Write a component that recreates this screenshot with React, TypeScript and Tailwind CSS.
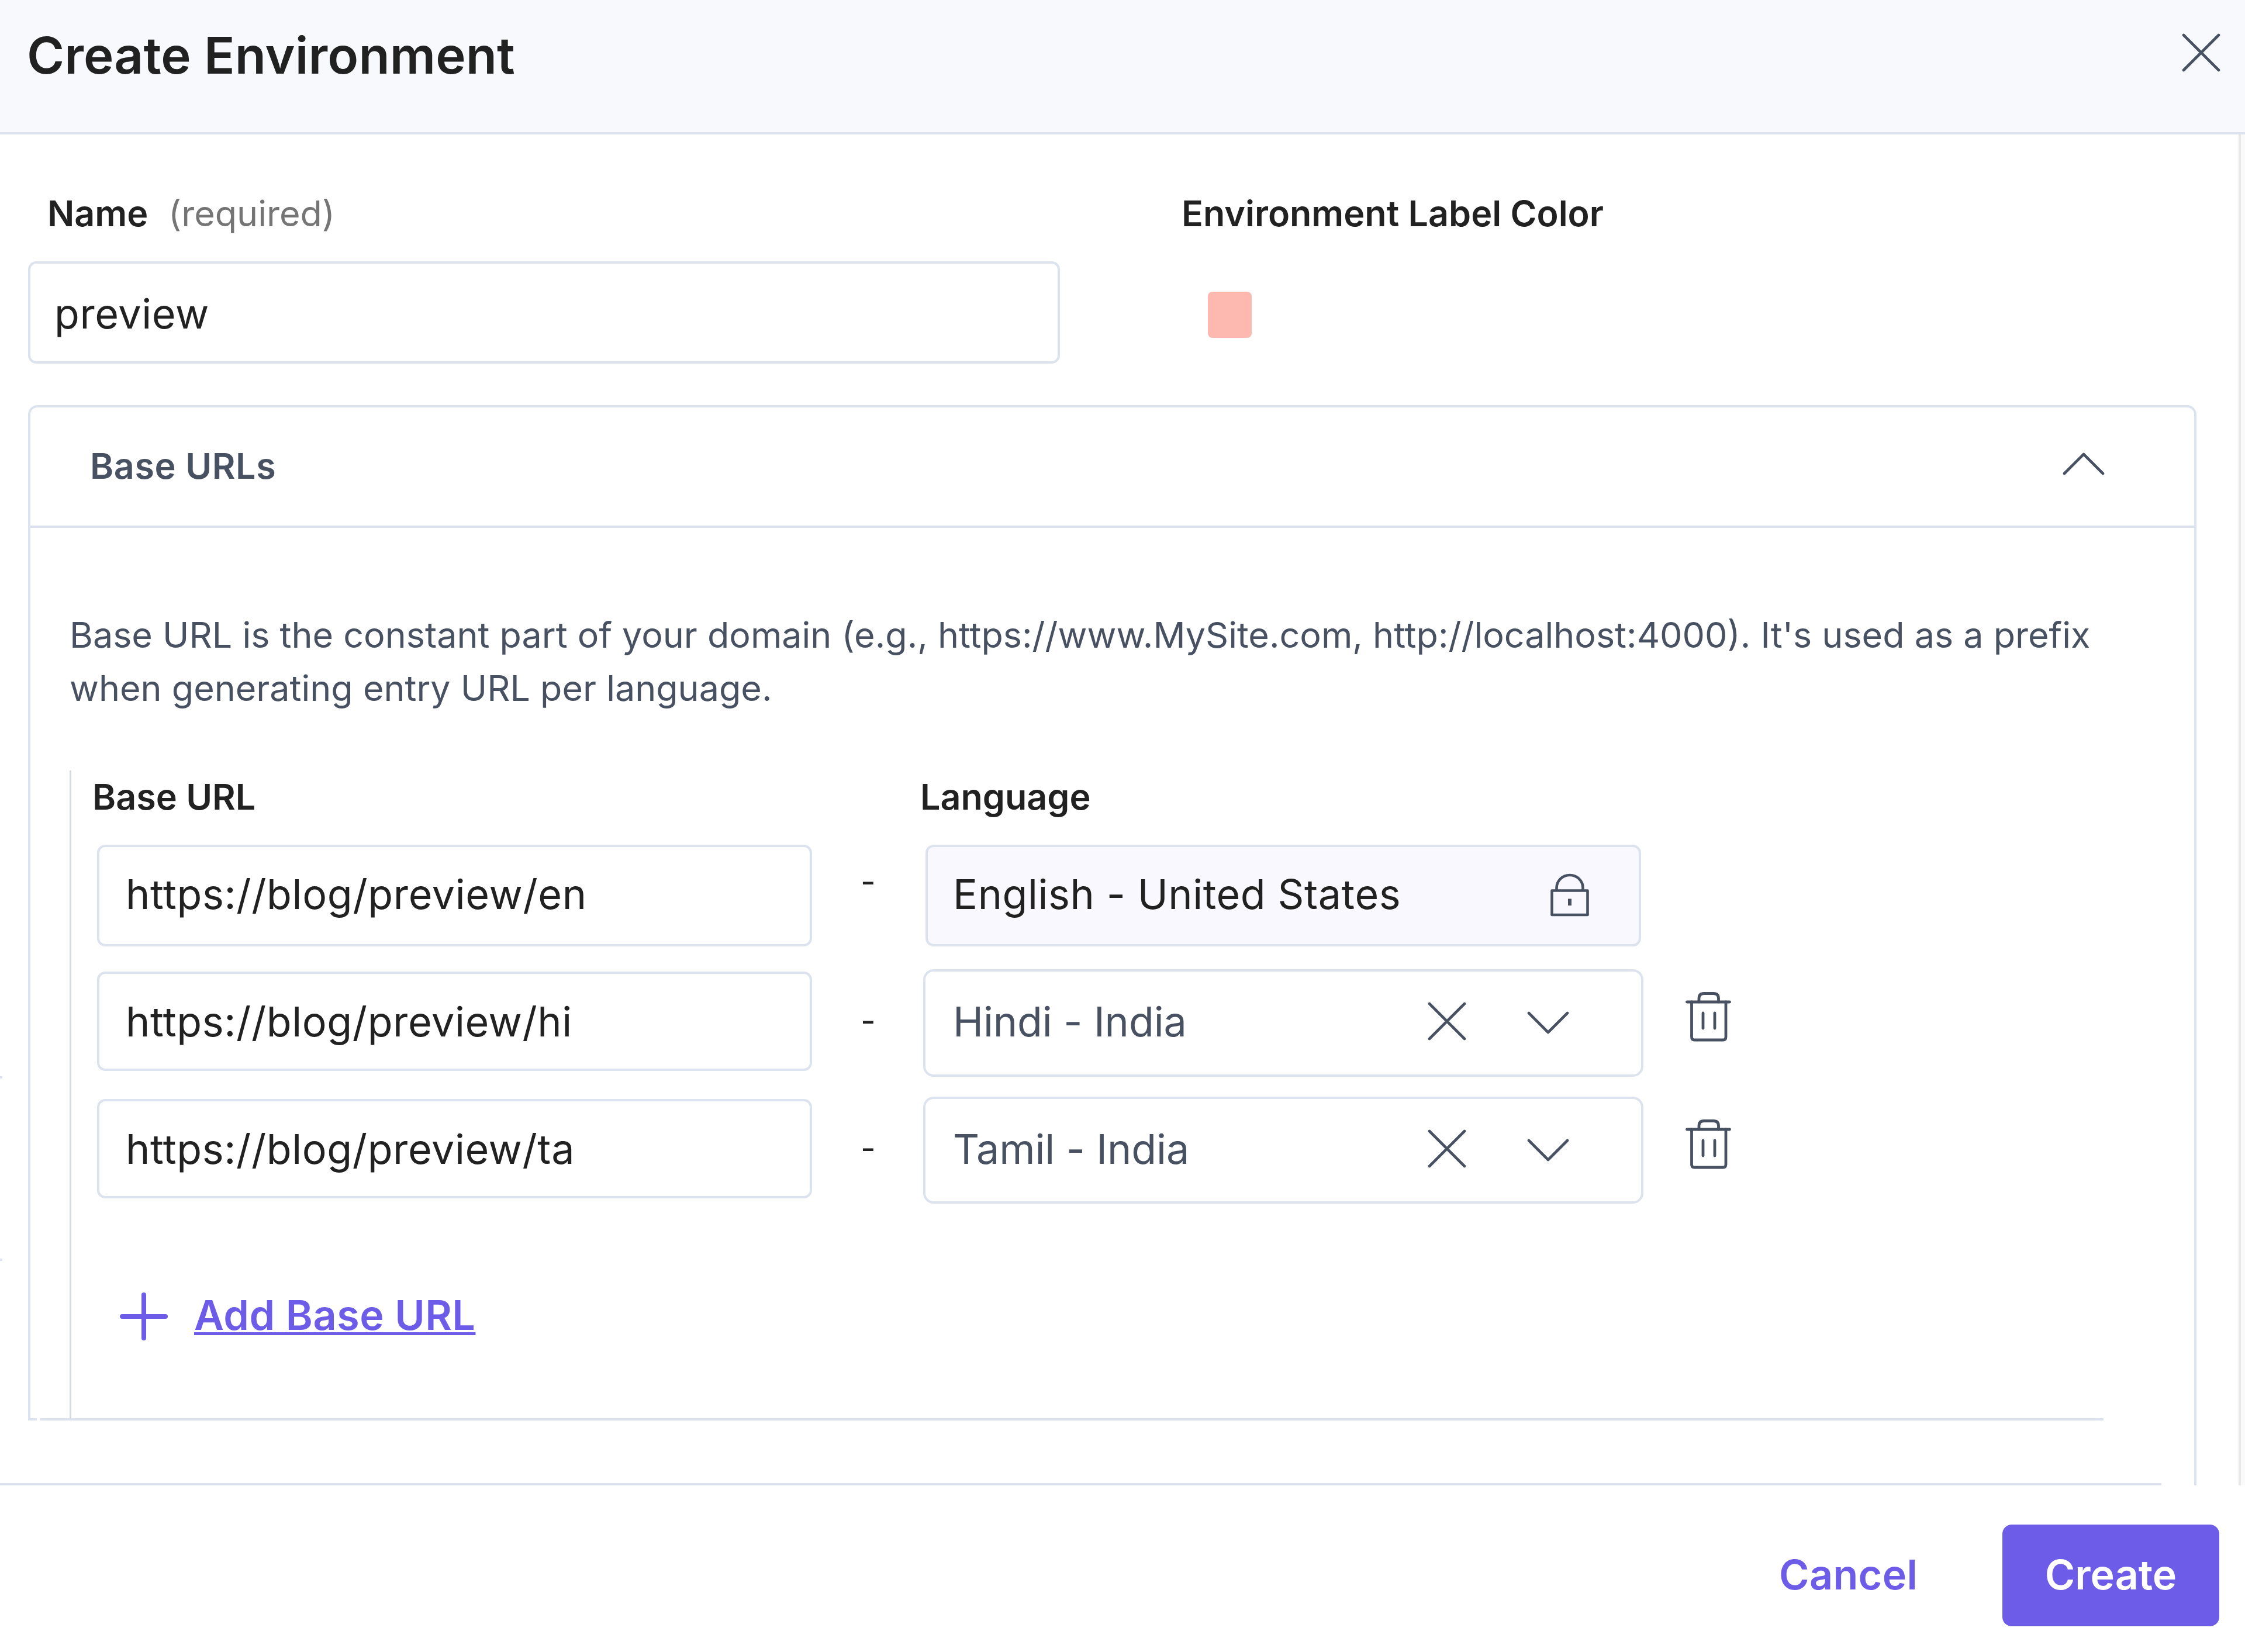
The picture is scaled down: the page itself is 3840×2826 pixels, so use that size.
import React from 'react';

const rows = [
  { url: 'https://blog/preview/hi', language: 'Hindi - India' },
  { url: 'https://blog/preview/ta', language: 'Tamil - India' },
];

function CloseIcon({ className }: { className?: string }) {
  return (
    <svg className={className} width="66" height="66" viewBox="0 0 66 66" fill="none" stroke="#475161" strokeWidth="4.6" strokeLinecap="round">
      <path d="M3 3L63 63M63 3L3 63" />
    </svg>
  );
}

function ChevronIcon({ className }: { className?: string }) {
  return (
    <svg className={className} width="72" height="40" viewBox="0 0 72 40" fill="none" stroke="#475161" strokeWidth="4.6" strokeLinecap="round" strokeLinejoin="round">
      <path d="M3 3L36 36L69 3" />
    </svg>
  );
}

function LockIcon() {
  return (
    <svg className="-mt-0.5 h-[74px] w-[68px]" viewBox="0 0 68 74" fill="none" stroke="#475161" strokeWidth="4.6" strokeLinejoin="round">
      <path d="M3.5 29.5H64.5V71H3.5Z" />
      <path d="M11.5 29.5V25C11.5 12.5 21.5 3 34 3S56.5 12.5 56.5 25V29.5" />
      <path d="M34 43.5V55" strokeWidth="6" />
    </svg>
  );
}

function TrashIcon() {
  return (
    <svg className="h-[86px] w-[78px]" viewBox="0 0 78 86" fill="none" stroke="#475161" strokeWidth="4.8" strokeLinecap="round" strokeLinejoin="round">
      <path d="M2.5 18H75.5" />
      <path d="M10.5 18V78Q10.5 83 15.5 83H64Q69 83 69 78V18" />
      <path d="M23 18V12Q23 3.5 31.5 3.5H48Q56.5 3.5 56.5 12V18" />
      <path d="M30 37V63M50 37V63" />
    </svg>
  );
}

function PlusIcon() {
  return (
    <svg className="h-[82px] w-[82px]" viewBox="0 0 82 82" fill="none" stroke="#6c5ce7" strokeWidth="8" strokeLinecap="round">
      <path d="M41 4V78M4 41H78" />
    </svg>
  );
}

export default function App() {
  return (
    <div className="relative flex h-[2826px] w-[3840px] flex-col overflow-hidden bg-white font-['Inter',sans-serif] text-[#212121]">
      {/* Header */}
      <header className="flex h-[230px] items-start justify-between border-b-4 border-[#dde3ee] bg-[#f7f9fd] pl-[46px] pr-[42px]">
        <h1 className="mt-[45px] text-[87px] font-semibold leading-[100px] tracking-[0.1px]">Create Environment</h1>
        <button className="mt-[57px]">
          <CloseIcon />
        </button>
      </header>

      <div className="flex h-[2311px]">
        <main className="flex w-[3829px] flex-col">
          {/* Name and label color */}
          <section className="flex h-[463px] pl-12 pt-[90px]">
            <div className="w-[1765px]">
              <div className="flex pl-[33px] text-[61px] leading-[90px]">
                <label className="w-[207px] font-semibold">Name</label>
                <span className="text-[#757575]">(required)</span>
              </div>
              <div className="mt-[37px] flex h-[175px] items-center rounded-[14px] border-4 border-[#dde3ee] pl-[41px] pt-1 text-[70px] leading-[90px] tracking-[0.6px]">
                preview
              </div>
            </div>
            <div className="ml-[208px]">
              <div className="text-[61px] font-semibold leading-[90px]">Environment Label Color</div>
              <div className="ml-[45px] mt-[89px] h-[79px] w-[75px] rounded-[8px] bg-[#fdb8b0]"></div>
            </div>
          </section>

          {/* Base URLs accordion */}
          <section className="ml-12 w-[3709px]">
            <div className="flex h-[210px] items-center justify-between rounded-t-[16px] border-4 border-[#dde3ee] pl-[102px] pr-[153px]">
              <h2 className="pb-0.5 text-[61px] font-semibold leading-[90px] tracking-[0.6px] text-[#475161]">Base URLs</h2>
              <ChevronIcon className="-mt-2.5 rotate-180" />
            </div>

            <div className="flex h-[1527px] flex-col border-x-4 border-[#dde3ee] pt-[138px]">
              <p className="ml-[67px] whitespace-nowrap text-[61px] leading-[91px] text-[#475161]">
                Base URL is the constant part of your domain (e.g., https://www.MySite.com, http://localhost:4000). It's used as a prefix
                <br />
                when generating entry URL per language.
              </p>

              <div className="ml-[67px] mt-[95px] flex-1 border-l-[3px] border-[#d3d9e3]">
                <div className="flex pl-9 text-[61px] font-semibold leading-[90px]">
                  <div className="w-[1416px]">Base URL</div>
                  <div>Language</div>
                </div>

                {/* Default language row */}
                <div className="mt-[37px] flex h-[174px] pl-11 text-[70px] leading-[90px]">
                  <div className="flex w-[1223px] items-center rounded-[14px] border-4 border-[#dde3ee] pb-1 pl-[45px] tracking-[0.65px]">https://blog/preview/en</div>
                  <div className="w-[194px] pl-[83px] pt-[18px] text-[56px]">-</div>
                  <div className="flex w-[1224px] items-center justify-between rounded-[14px] border-4 border-[#dde3ee] bg-[#f9f8ff] pl-[43px] pr-[84px]">
                    <span className="pb-1 tracking-[0.55px]">English - United States</span>
                    <LockIcon />
                  </div>
                </div>

                {rows.map((row, i) => (
                  <div key={i} className={i === 0 ? 'mt-[39px] flex h-[184px] pl-11 text-[70px] leading-[90px]' : 'mt-[34px] flex h-[183px] pl-11 text-[70px] leading-[90px]'}>
                    <div className="mt-1 flex h-[170px] w-[1223px] items-center rounded-[14px] border-4 border-[#dde3ee] pl-[45px] pt-px tracking-[0.6px]">{row.url}</div>
                    <div className="w-[190px] pl-[83px] pt-[43px] text-[56px]">-</div>
                    <div className="flex w-[1232px] items-center rounded-[18px] border-4 border-[#dde3ee] pb-1 pl-[47px] text-[#475161]">
                      <span className="w-[812px] tracking-[-0.1px]">{row.language}</span>
                      <CloseIcon className="-mt-0.5" />
                      <ChevronIcon className="ml-[104px] mt-1" />
                    </div>
                    <button className="ml-[72px] mt-[38px] self-start">
                      <TrashIcon />
                    </button>
                  </div>
                ))}

                <div className="mt-[145px] flex h-[90px] items-center pl-[83px]">
                  <div className="mt-1.5">
                    <PlusIcon />
                  </div>
                  <a className="ml-[45px] pt-0.5 text-[70px] font-semibold leading-[90px] tracking-[0.5px] text-[#6c5ce7] underline decoration-[5px] underline-offset-[4px]">Add Base URL</a>
                </div>
              </div>

              <div className="flex gap-[5px]">
                <div className="h-1 w-[11px] bg-[#dde3ee]"></div>
                <div className="h-1 w-[3530px] bg-[#dde3ee]"></div>
              </div>
            </div>

            <div className="h-[107px] border-r-4 border-[#dde3ee]"></div>
          </section>

          <div className="flex h-1 gap-14">
            <div className="w-[3697px] bg-[#dde3ee]"></div>
            <div className="w-1 bg-[#dde3ee]"></div>
          </div>
        </main>

        {/* Scrollbar track */}
        <div className="flex-1 border-l-4 border-[#e8e8e8] bg-[#fafafa]"></div>
      </div>

      {/* Footer */}
      <footer className="flex justify-end pr-11 pt-[67px] text-[70px] font-semibold leading-[90px]">
        <button className="flex h-[174px] items-center pb-0.5 tracking-[0.3px] text-[#6c5ce7]">Cancel</button>
        <button className="ml-[145px] flex h-[174px] w-[371px] items-center justify-center rounded-[16px] bg-[#6c5ce7] pb-0.5 text-white">Create</button>
      </footer>

      {/* Edge of the panel behind */}
      <div className="absolute left-0 top-[1841px] h-1 w-1 bg-[#dde3ee]"></div>
      <div className="absolute left-0 top-[2153px] h-1 w-1 bg-[#dde3ee]"></div>
    </div>
  );
}
